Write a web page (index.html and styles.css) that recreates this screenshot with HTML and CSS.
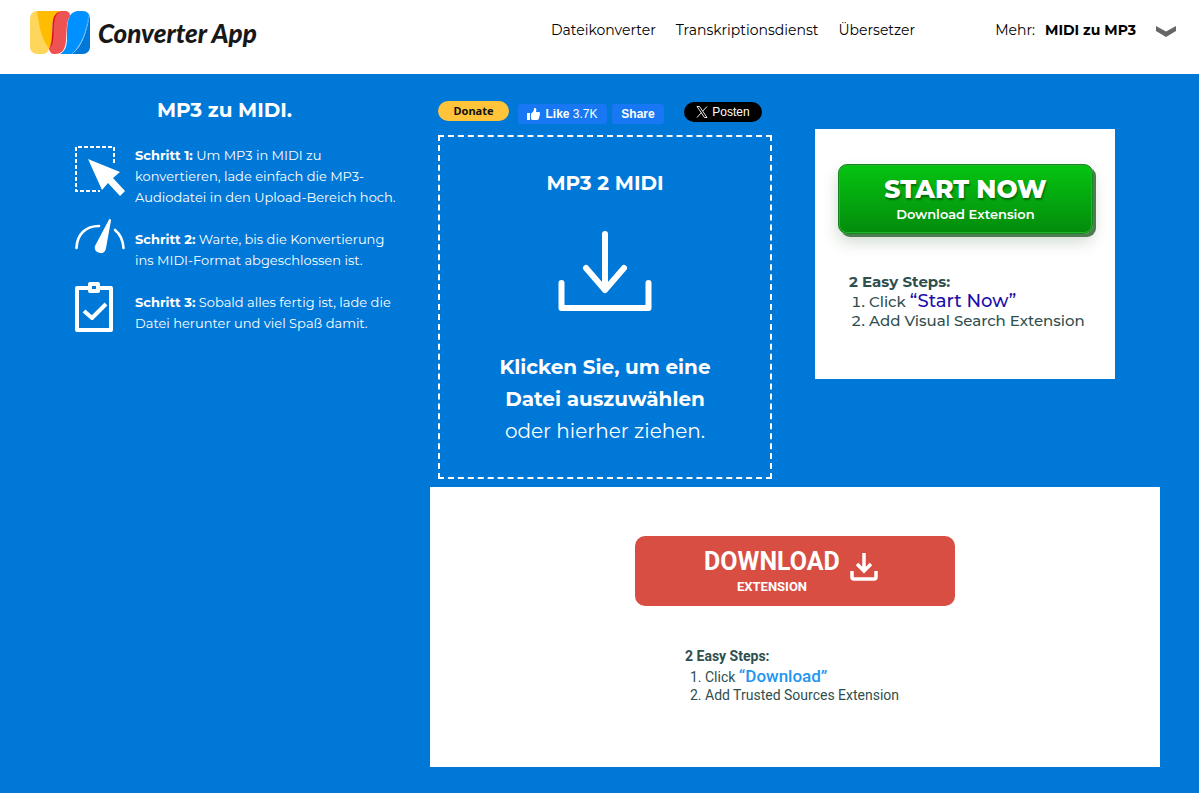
FILE: index.html
```html
<!DOCTYPE html>
<html lang="de">
<head>
<meta charset="utf-8">
<meta name="viewport" content="width=device-width, initial-scale=1">
<title>MP3 zu MIDI – Converter App</title>
<link rel="stylesheet" href="styles.css">
</head>
<body>
<header class="header">
  <a class="brand" href="#">
    <svg class="brand-mark" viewBox="0 0 60 43" aria-hidden="true">
      <defs><clipPath id="mark"><rect width="60" height="43" rx="7"/></clipPath></defs>
      <g clip-path="url(#mark)">
        <path fill="#ffd65c" d="M0 0h10C11 20 15 32 19 38c-1 4-4 5-7 5H0z"/>
        <path fill="#ffbc00" d="M7 0h24c-6 2-8 7-8.500 13C22 23 23 32 19 38 11 27 9 14 7 0z"/>
        <path fill="#dc1119" d="M34 0c-9 0-11 6-11.500 13C22 24 22 33 19 38l3 3 14-35z"/>
        <path fill="#ee5253" d="M34 0c5 0 6 2 6 5-4 6-3 14-4 25-1 9-4 13-11 13-4 0-5-2-6-5 6-5 4-16 5-25 1-8 3-13 10-13z"/>
        <path fill="#0090ff" d="M49 0h11v4c-4 17-8 30-18 39H30c6-3 7-10 7-16 0-9 0-15 2-20 2-5 5-7 10-7z"/>
        <path fill="#0078d8" d="M60 3v40H42C53 35 57 19 60 3z"/>
        <path fill="none" stroke="#75c0f5" stroke-width=".5" d="M59 4c-3 15-6 30-17 39"/>
      </g>
    </svg>
    <span class="brand-name">Converter App</span>
  </a>
  <nav class="nav">
    <a href="#">Dateikonverter</a>
    <a href="#">Transkriptionsdienst</a>
    <a href="#">Übersetzer</a>
  </nav>
  <div class="more">
    <span>Mehr:</span>
    <a class="more-link" href="#">MIDI zu MP3</a>
    <button class="more-toggle" type="button" aria-label="Mehr anzeigen">
      <svg viewBox="0 0 20 11" aria-hidden="true"><path fill="#666" d="M0 0l10 5.500L20 0v5L10 11 0 5z"/></svg>
    </button>
  </div>
</header>

<main class="main">
  <section class="guide">
    <h1 class="guide-title">MP3 zu MIDI.</h1>
    <div class="step">
      <svg class="step-icon" viewBox="0 0 50 51" aria-hidden="true">
        <path fill="none" stroke="#fff" stroke-width="2" stroke-dasharray="4 2" d="M39 18V2H1v44h24"/>
        <path fill="#fff" d="M13 14l32 13-7 6 12 13-5 5-12-13-6 7z"/>
      </svg>
      <p class="step-text"><b>Schritt 1:</b> Um MP3 in MIDI zu konvertieren, lade einfach die MP3-Audiodatei in den Upload-Bereich hoch.</p>
    </div>
    <div class="step">
      <svg class="step-icon gauge" viewBox="0 7 50 36" aria-hidden="true">
        <path fill="none" stroke="#fff" stroke-width="2.600" stroke-linecap="round" d="M1.500 36C2 22 11 14 24 14M40 18c5 4 8 10 8.500 18"/>
        <path fill="#fff" d="M34 7.500c1-1 2 0 2 1L31 36c-1 5-4 5.500-6 5-4-1-6-3-5-7z"/>
      </svg>
      <p class="step-text short"><b>Schritt 2:</b> Warte, bis die Konvertierung ins MIDI-Format abgeschlossen ist.</p>
    </div>
    <div class="step">
      <svg class="step-icon" viewBox="0 0 50 51" aria-hidden="true">
        <path fill="none" stroke="#fff" stroke-width="4" stroke-linejoin="round" d="M14 6H2v42h34V6H24M15 2h8v7h-8zM9 29l8 7 14-14"/>
      </svg>
      <p class="step-text short"><b>Schritt 3:</b> Sobald alles fertig ist, lade die Datei herunter und viel Spaß damit.</p>
    </div>
  </section>

  <section class="convert">
    <div class="social">
      <button class="donate" type="button">Donate</button>
      <div class="facebook">
        <button class="fb-button fb-like" type="button">
          <svg viewBox="0 0 13 12" aria-hidden="true"><path fill="#fff" d="M0 5h3v7H0zM4 5.500C6 4 7 3 7 0.500 8-.5 9.500.5 9.300 2L9 4h3c1 0 1.300 1 .7 1.700.5.6.3 1.300-.2 1.700.4.700.1 1.300-.4 1.600.1 2-.6 3-2 3H6c-1 0-1.500-.5-2-1z"/></svg>
          <span><b>Like</b> 3.7K</span>
        </button>
        <button class="fb-button fb-share" type="button"><b>Share</b></button>
      </div>
      <button class="post" type="button">
        <svg viewBox="0 0 12 12" aria-hidden="true"><path fill="none" stroke="#fff" stroke-width=".9" d="M1 .5h2.500l7.500 11H8.500zM11 .5L6.600 5.300M1 11.500l4.500-5"/></svg>
        Posten
      </button>
    </div>
    <label class="dropzone">
      <input class="dropzone-input" type="file">
      <span class="dropzone-title">MP3 2 MIDI</span>
      <svg class="dropzone-icon" viewBox="0 0 94 80" aria-hidden="true">
        <path fill="none" stroke="#fff" stroke-width="6" stroke-linecap="round" stroke-linejoin="round" d="M3.500 52v25h87V52M47 3v54M28 37l19 22 19-22"/>
      </svg>
      <span class="dropzone-text"><b>Klicken Sie, um eine Datei auszuwählen</b> oder hierher ziehen.</span>
    </label>
  </section>

  <aside class="side-ad">
    <button class="start" type="button">
      <span class="start-title">START NOW</span>
      <span class="start-sub">Download Extension</span>
    </button>
    <div class="side-steps">
      <b>2 Easy Steps:</b>
      <ol>
        <li>Click <a href="#">“Start Now”</a></li>
        <li>Add Visual Search Extension</li>
      </ol>
    </div>
  </aside>

  <aside class="wide-ad">
    <button class="download" type="button">
      <span class="download-label">
        <span class="download-title">DOWNLOAD</span>
        <span class="download-sub">EXTENSION</span>
      </span>
      <svg viewBox="0 0 28 28" aria-hidden="true">
        <path fill="none" stroke="#fff" stroke-width="3.500" d="M14 0v18M7 11l7 7 7-7"/>
        <path fill="none" stroke="#fff" stroke-width="3.500" d="M2 18v6q0 2 2 2h20q2 0 2-2v-6"/>
      </svg>
    </button>
    <div class="wide-steps">
      <b>2 Easy Steps:</b>
      <ol>
        <li>Click <a href="#">“Download”</a></li>
        <li>Add Trusted Sources Extension</li>
      </ol>
    </div>
  </aside>
</main>
</body>
</html>
```
FILE: styles.css
```css
* { box-sizing: border-box; }

body {
  margin: 0;
  min-height: 100vh;
  background: #0078d8;
  font-family: Montserrat, Inter, sans-serif;
  font-size: 14px;
  color: #000;
}

a { color: inherit; text-decoration: none; }
button { border: 0; margin: 0; padding: 0; font: inherit; cursor: pointer; }
svg { display: block; flex: none; }

.header {
  display: flex;
  align-items: flex-start;
  min-height: 74px;
  padding: 11px 23px 0 30px;
  background: #fff;
  line-height: 20px;
}

.brand { display: flex; align-items: flex-start; gap: 8px; color: #181818; }
.brand-mark { width: 60px; height: 43px; }
.brand-name {
  font: italic 900 26px/44px Lato, sans-serif;
  white-space: nowrap;
}

.nav { display: flex; gap: 20px; margin-left: auto; padding-top: 9px; }
.more { display: flex; align-items: flex-start; gap: 10px; margin-left: 80px; padding-top: 9px; }
.more-link { font-weight: 700; }
.more-toggle { margin-left: 10px; padding-top: 6px; background: none; }
.more-toggle svg { width: 20px; height: 11px; }

.main {
  display: grid;
  grid-template-columns: 430px 350px minmax(0, 1fr);
  grid-template-rows: 413px auto;
  padding: 0 39px 26px 0;
}

.guide {
  grid-row: 1 / 3;
  padding: 24px 30px 0 75px;
  color: #fff;
  font-size: 13px;
  line-height: 21px;
}
.guide-title {
  margin: 0 26px 22px 0;
  font-size: 20px;
  line-height: 25px;
  text-align: center;
}
.step { display: flex; align-items: flex-start; gap: 10px; margin-bottom: 11px; }
.step-icon { width: 50px; height: 51px; }
.gauge { height: 36px; }
.step-text { margin: 0; }
.short { padding-top: 10px; }

.convert { padding: 27px 8px 8px; }
.social { display: flex; align-items: flex-start; height: 34px; }
.donate {
  width: 71px;
  height: 20px;
  margin-right: 9px;
  border-radius: 10px;
  background: #ffc439;
  color: #111;
  font: bold 11px/20px "Noto Sans", sans-serif;
}
.facebook { display: flex; gap: 5px; margin: 3px 20px 0 0; }
.fb-button {
  display: flex;
  align-items: center;
  justify-content: center;
  gap: 5px;
  width: 89px;
  height: 20px;
  border-radius: 3px;
  background: #1877f2;
  color: #fff;
  font: 12px/20px "Liberation Sans", Arial, sans-serif;
}
.fb-share { width: 52px; }
.fb-like svg { width: 13px; height: 12px; }
.post {
  display: flex;
  align-items: center;
  justify-content: center;
  gap: 4px;
  width: 78px;
  height: 20px;
  margin-top: 1px;
  border-radius: 10px;
  background: #000;
  color: #fff;
  font: 12px/20px "Liberation Sans", Arial, sans-serif;
}
.post svg { width: 12px; height: 12px; }

.dropzone {
  display: flex;
  flex-direction: column;
  align-items: center;
  min-height: 344px;
  padding: 30px 40px;
  border: 2px dashed #fff;
  color: #fff;
  font-size: 20px;
  line-height: 32px;
  text-align: center;
  cursor: pointer;
}
.dropzone-input { position: absolute; width: 1px; height: 1px; opacity: 0; }
.dropzone-title { font-weight: 700; }
.dropzone-icon { width: 94px; height: 80px; margin: 32px 0 40px; }
.dropzone-text b { display: block; }

.side-ad {
  width: 300px;
  height: 250px;
  margin: 55px 0 0 35px;
  padding: 35px 20px 0 23px;
  background: #fff;
  color: #2f4f4f;
}
.start {
  display: flex;
  flex-direction: column;
  align-items: center;
  width: 255px;
  height: 70px;
  padding-top: 9px;
  border: 1px solid #168522;
  border-radius: 9px;
  background: linear-gradient(#05c411, #038b0c);
  box-shadow: inset 0 0 0 1px #20b52b, 3px 3px 0 #4d7c50, 0 8px 16px rgba(20, 70, 20, .2);
  color: #fff;
}
.start-title { font-size: 25px; font-weight: 800; line-height: 30px; text-shadow: 1px 2px 2px rgba(0, 0, 0, .4); }
.start-sub { font-size: 13px; font-weight: 600; line-height: 20px; }
.side-steps { margin: 38px 0 0 11px; font-size: 15px; font-weight: 500; line-height: 20px; }
ol { margin: 0; padding-left: 20px; }
.side-steps li { line-height: 19px; }
.side-steps a { color: #1a0dab; font-size: 18px; }

.wide-ad {
  display: flex;
  flex-direction: column;
  align-items: center;
  grid-column: 2 / 4;
  min-height: 280px;
  padding-top: 49px;
  background: #fff;
  color: #2f4f4f;
  font: 14px/18px Roboto, sans-serif;
}
.download {
  display: flex;
  justify-content: center;
  align-items: flex-start;
  gap: 10px;
  width: 320px;
  height: 70px;
  padding: 11px 8px 0 0;
  border-radius: 10px;
  background: #d94e43;
  color: #fff;
  font-weight: 700;
}
.download-label { display: flex; flex-direction: column; align-items: center; }
.download-title { font-size: 25px; line-height: 30px; }
.download-sub { font-size: 13px; line-height: 20px; }
.download svg { width: 28px; height: 28px; margin-top: 6px; }
.wide-steps { width: 220px; margin-top: 41px; }
.wide-steps ol { padding-top: 2px; }
.wide-steps a { color: #2196f3; font-size: 17px; font-weight: 500; }
```
